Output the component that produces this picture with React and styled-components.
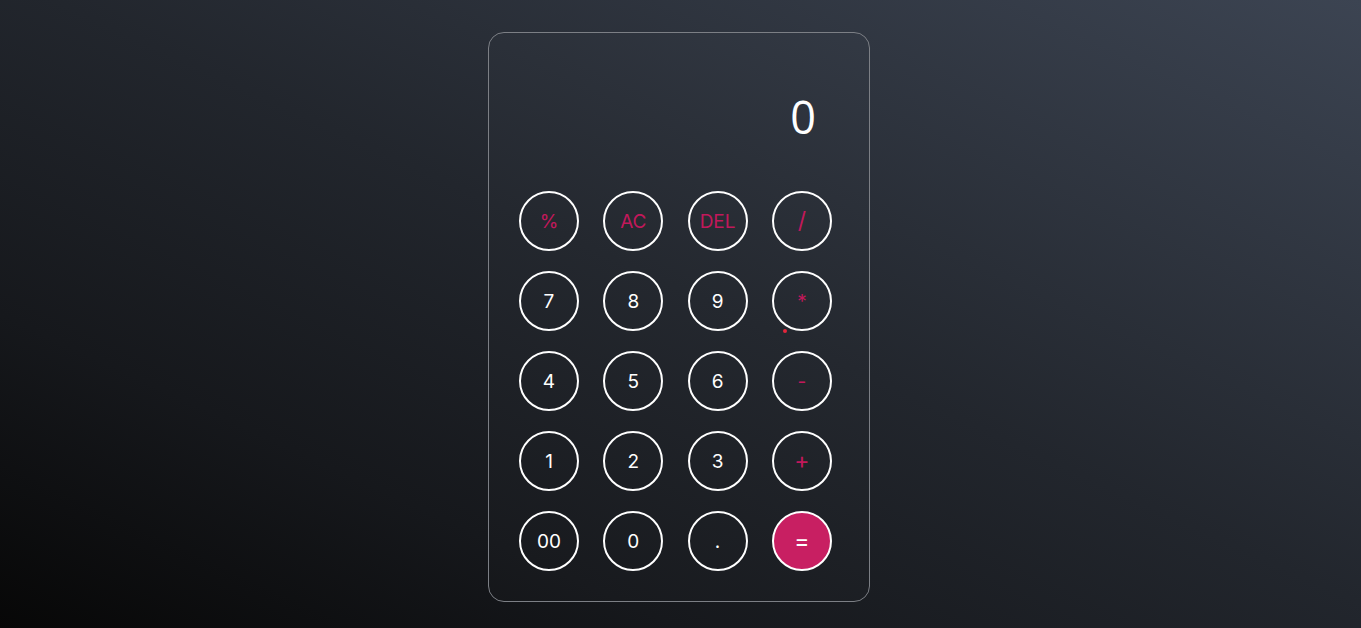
import React from "react";
import styled, { createGlobalStyle } from "styled-components";

const GlobalStyle = createGlobalStyle`
  html, body {
    margin: 0;
    padding: 0;
    height: 100%;
  }
  body {
    background: linear-gradient(to top right, #070707 0%, #16181c 25%, #22262d 52%, #3c4452 100%);
    font-family: Inter, "Open Sans", sans-serif;
  }
`;

const Page = styled.div`
  width: 100%;
  height: 628px;
  display: flex;
  justify-content: center;
  padding-top: 32px;
  box-sizing: border-box;
`;

const Card = styled.div`
  position: relative;
  width: 382px;
  height: 570px;
  box-sizing: border-box;
  margin-left: -3px;
  border: 1px solid #7c7f85;
  border-radius: 16px;
  background: rgba(255, 255, 255, 0.01);
  padding: 30px 37px 29px 30px;
`;

const Display = styled.div`
  height: 106px;
  margin-bottom: 22px;
  display: flex;
  align-items: center;
  justify-content: flex-end;
  padding-right: 16px;
  color: #ffffff;
  font-family: "Open Sans", sans-serif;
  font-size: 45px;
`;

const Keys = styled.div`
  display: grid;
  grid-template-columns: repeat(4, 60px);
  grid-auto-rows: 60px;
  column-gap: 24.3px;
  row-gap: 20px;
`;

const Key = styled.button`
  width: 60px;
  height: 60px;
  border-radius: 50%;
  border: 2px solid #ffffff;
  background: ${(p) => (p.$fill ? "#c81f62" : "transparent")};
  color: ${(p) => (p.$fill ? "#ffffff" : p.$op ? "#c2185b" : "#ffffff")};
  font-family: Inter, "Open Sans", sans-serif;
  font-size: ${(p) => (p.$big ? "23px" : "19px")};
  font-weight: 400;
  display: flex;
  align-items: center;
  justify-content: center;
  padding: 0;
  cursor: pointer;
`;

const Dot = styled.span`
  position: absolute;
  left: 294px;
  top: 296px;
  width: 4px;
  height: 4px;
  border-radius: 50%;
  background: #e3253b;
`;

const keys = [
  ["%", true], ["AC", true], ["DEL", true], ["/", true, true],
  ["7"], ["8"], ["9"], ["*", true],
  ["4"], ["5"], ["6"], ["-", true],
  ["1"], ["2"], ["3"], ["+", true, true],
  ["00"], ["0"], ["."], ["=", false, true, true],
];

export default function App() {
  return (
    <>
      <GlobalStyle />
      <Page>
        <Card>
          <Display>0</Display>
          <Keys>
            {keys.map(([label, op, big, fill]) => (
              <Key key={label} $op={op} $big={big} $fill={fill}>
                {label}
              </Key>
            ))}
          </Keys>
          <Dot />
        </Card>
      </Page>
    </>
  );
}
